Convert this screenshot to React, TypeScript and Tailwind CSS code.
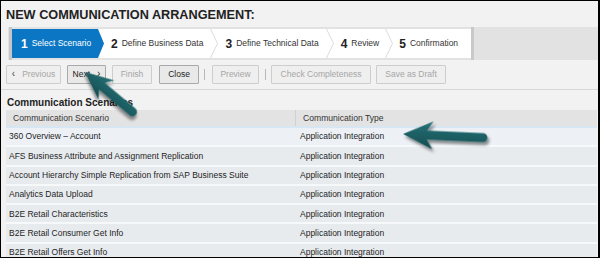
import React from "react";

const rows = [
  "360 Overview – Account",
  "AFS Business Attribute and Assignment Replication",
  "Account Hierarchy Simple Replication from SAP Business Suite",
  "Analytics Data Upload",
  "B2E Retail Characteristics",
  "B2E Retail Consumer Get Info",
  "B2E Retail Offers Get Info",
];

function Chevron() {
  return (
    <svg width="8" height="29" viewBox="0 0 8 29" className="shrink-0">
      <polyline points="0.5,0 7.5,14.5 0.5,29" fill="none" stroke="#dcdcdc" strokeWidth="1" />
    </svg>
  );
}

function Step({ n, label }: { n: string; label: string }) {
  return (
    <div className="flex items-center">
      <span className="text-[12px] font-bold text-[#222] leading-none">{n}</span>
      <span className="ml-[4px] text-[8.5px] text-[#333] leading-none">{label}</span>
    </div>
  );
}

function Btn({ w, children, enabled }: { w: string; children: React.ReactNode; enabled?: boolean }) {
  return (
    <div
      className={
        "h-[19px] flex items-center justify-center border rounded-[1px] text-[8.5px] leading-none shrink-0 " +
        w +
        (enabled
          ? " border-[#a9a9a9] bg-[#e9e9e9] text-[#222]"
          : " border-[#cdcdcd] bg-[#efefef] text-[#a6a6a6]")
      }
    >
      {children}
    </div>
  );
}

function Arrow({ x, y, angle, L, head, half }: { x: number; y: number; angle: number; L: number; head: number; half: number }) {
  const s = 4.5;
  const notch = head - 6;
  const d = `M0,0 L${head},${-half} L${notch},${-s} L${L},${-s} A${s},${s} 0 0 1 ${L},${s} L${notch},${s} L${head},${half} Z`;
  return (
    <g transform={`translate(${x} ${y}) rotate(${angle})`} filter="url(#sh)">
      <path d={d} fill="url(#ag)" />
    </g>
  );
}

export default function App() {
  return (
    <div
      className="relative w-[600px] h-[258px] overflow-hidden bg-[#f2f2f2] border-t border-l border-b border-r-2 border-black"
      style={{ fontFamily: '"Liberation Sans", Arial, sans-serif' }}
    >
      {/* Title */}
      <div className="h-[26px] flex items-center pt-[2px] pl-[5px]">
        <span className="text-[12.7px] font-bold text-[#222] leading-none">NEW COMMUNICATION ARRANGEMENT:</span>
      </div>

      {/* Step bar */}
      <div className="h-[33px] ml-[7px] flex bg-[#e2e2e2]">
        <div className="w-[1px]" />
        <div className="w-[3px] bg-[#c6c6c6]" />
        <div className="py-[2px] flex">
          <div className="flex bg-white h-full">
            <div className="w-[92px] h-full bg-[#0b77c4] flex items-center pl-[9px] [clip-path:polygon(0_0,calc(100%-6px)_0,100%_50%,calc(100%-6px)_100%,0_100%)]">
              <span className="text-[12px] font-bold text-white leading-none">1</span>
              <span className="ml-[4px] text-[8.5px] text-white leading-none">Select Scenario</span>
            </div>
            <div className="flex items-center pl-[7px]">
              <Step n="2" label="Define Business Data" />
              <div className="mx-[7px] flex items-center"><Chevron /></div>
              <Step n="3" label="Define Technical Data" />
              <div className="mx-[7px] flex items-center"><Chevron /></div>
              <Step n="4" label="Review" />
              <div className="mx-[6px] flex items-center"><Chevron /></div>
              <Step n="5" label="Confirmation" />
              <div className="w-[13px]" />
            </div>
          </div>
        </div>
        <div className="w-[3px] bg-[#c9c9c9]" />
      </div>

      {/* Toolbar */}
      <div className="h-[30px] pt-[5px] pl-[5px] border-b border-[#d8d8d8] flex items-start">
        <Btn w="w-[55px]">
          <span className="text-[#444] text-[10px] mr-[7px] -mt-[1px]">‹</span>Previous
        </Btn>
        <div className="w-[6px]" />
        <Btn w="w-[39px]" enabled>
          Next<span className="ml-[7px] text-[10px] -mt-[1px]">›</span>
        </Btn>
        <div className="w-[6px]" />
        <Btn w="w-[40px]">Finish</Btn>
        <div className="w-[7px]" />
        <Btn w="w-[40px]" enabled>Close</Btn>
        <div className="w-[5px]" />
        <div className="w-px h-[11px] mt-[4px] bg-[#b8b8b8]" />
        <div className="w-[7px]" />
        <Btn w="w-[47px]">Preview</Btn>
        <div className="w-[6px]" />
        <div className="w-px h-[11px] mt-[4px] bg-[#b8b8b8]" />
        <div className="w-[5px]" />
        <Btn w="w-[100px]">Check Completeness</Btn>
        <div className="w-[5px]" />
        <Btn w="w-[70px]">Save as Draft</Btn>
      </div>

      {/* Section title */}
      <div className="h-[20px] pt-[8px] pl-[6px]">
        <span className="text-[10px] font-bold text-[#222] leading-none block">Communication Scenarios</span>
      </div>

      {/* Table */}
      <div className="ml-[5px] mr-[1px]">
        <div className="h-[16px] flex bg-[#e3e3e3] text-[8.6px] text-[#333] leading-none">
          <div className="w-[290px] flex items-center pl-[7px] border-r border-[#d0d0d0]">Communication Scenario</div>
          <div className="flex-1 flex items-center pl-[7px]">Communication Type</div>
        </div>
        {rows.map((r, i) => (
          <div
            key={r}
            className={
              "h-[19.3px] flex border-t-2 text-[8.5px] text-[#1e1e1e] leading-none " +
              (i === 0 ? "bg-[#edf1f5] border-[#d6e6f3]" : "bg-[#e8ebee] border-[#f7f8f9]")
            }
          >
            <div className="w-[290px] flex items-center pl-[3px]">{r}</div>
            <div className="flex-1 flex items-center pl-[4px]">Application Integration</div>
          </div>
        ))}
      </div>

      {/* Annotation arrows */}
      <svg className="absolute left-0 top-0 pointer-events-none" width="600" height="258" viewBox="1 1 600 258">
        <defs>
          <linearGradient id="ag" x1="0" y1="0" x2="0" y2="1">
            <stop offset="0" stopColor="#2a7378" />
            <stop offset="0.5" stopColor="#1c5f64" />
            <stop offset="1" stopColor="#154c50" />
          </linearGradient>
          <filter id="sh" x="-20%" y="-40%" width="150%" height="190%">
            <feDropShadow dx="2" dy="3" stdDeviation="1.6" floodColor="#000" floodOpacity="0.45" />
          </filter>
        </defs>
        <Arrow x={85} y={72} angle={40} L={62} head={28} half={12.5} />
        <Arrow x={403} y={134} angle={2.6} L={80} head={30} half={14} />
      </svg>
    </div>
  );
}
